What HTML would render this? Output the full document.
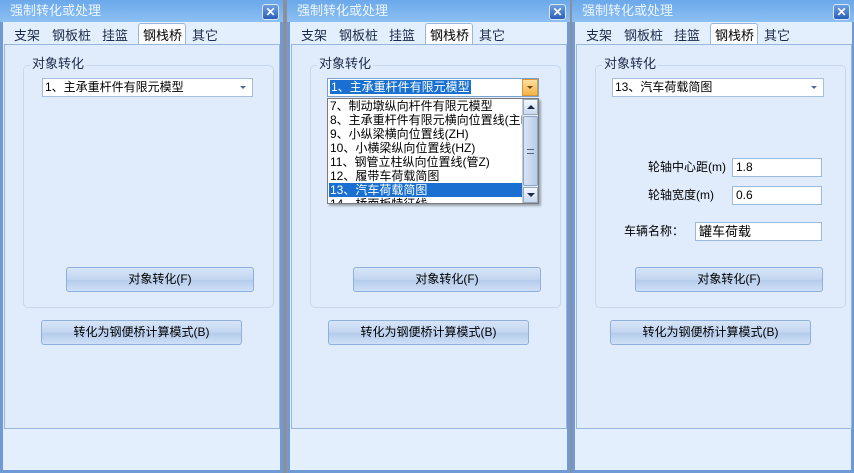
<!DOCTYPE html><html><head><meta charset="utf-8"><style>
*{margin:0;padding:0;box-sizing:border-box}
body{width:854px;height:473px;background:#8a8f99;position:relative;overflow:hidden;font-family:"Liberation Sans","Noto Sans CJK SC",sans-serif;font-size:12px;color:#000}
.p{position:absolute;top:0;width:283px;height:473px;background:#e3effd;border:3px solid #6f9ad6;border-top:none}
.a{position:absolute}
.tb{left:-3px;top:0;width:283px;height:22px;background:linear-gradient(#6aa8ea,#8cc0f2);color:#eef5ff;font-size:13px;line-height:22px;padding:0 0 0 10px}
.x{right:1px;top:4px;width:17px;height:16px;border-radius:3px;background:linear-gradient(#6ea0e0,#2a5fb8);border:1px solid #d8e6f8;color:#fff;font-weight:bold;font-size:12px;text-align:center;line-height:14px}
.tabs{left:0;top:22px;width:277px;height:22px;background:#e3effd}
.tab{top:3px;font-size:13px;color:#1c2a4a}
.sel{left:135px;top:1px;width:48px;height:22px;background:#fff;border:1px solid #99b6dc;border-bottom:none;border-radius:3px 3px 0 0;font-size:13px;padding:1px 0 0 4px}
.ct{left:1px;top:44px;width:276px;height:385px;background:#e0ecfb;border:1px solid #99b6dc}
.gb{left:18px;top:20px;width:251px;height:243px;border:1px solid #c8d8ec;border-radius:5px}
.gl{left:25px;top:11px;background:#e0ecfb;padding:0 2px;font-size:13px;line-height:15px;color:#1c2a4a}
.cb{height:19px;background:#fff;border:1px solid #a7bfdc;padding:0 0 0 2px;font-size:12px;line-height:17px}
.ar{right:6px;top:7px;width:0;height:0;border-left:3px solid transparent;border-right:3px solid transparent;border-top:3px solid #4a6a9a}
.bt{height:25px;border:1px solid #8fb0dc;border-radius:3px;background:linear-gradient(#d7e5f8,#c2d6f0 50%,#b5cbeb 52%,#cfe0f7);text-align:center;line-height:23px;font-size:12px}
.in{height:19px;background:#fff;border:1px solid #9ab8e0;padding:0 0 0 3px;font-size:12px;line-height:17px}
.li{position:absolute;left:1px;height:14px;line-height:14px;width:194px;font-size:12px;padding-left:1px;white-space:nowrap;overflow:hidden}
.lb{font-size:12px;line-height:15px}
</style></head><body>

<div class="p" style="left:0">
 <div class="a tb">强制转化或处理</div><div class="a x">✕</div>
 <div class="a tabs">
  <span class="a tab" style="left:11px">支架</span><span class="a tab" style="left:49px">钢板桩</span><span class="a tab" style="left:99px">挂篮</span>
  <div class="a sel">钢栈桥</div><span class="a tab" style="left:189px">其它</span>
 </div>
 <div class="a ct">
  <div class="a gb"></div><div class="a gl">对象转化</div>
  <div class="a cb" style="left:37px;top:33px;width:211px">1、主承重杆件有限元模型<div class="a ar"></div></div>
  <div class="a bt" style="left:61px;top:222px;width:188px">对象转化(F)</div>
  <div class="a bt" style="left:36px;top:275px;width:201px">转化为钢便桥计算模式(B)</div>
 </div>
</div>

<div class="p" style="left:287px">
 <div class="a tb">强制转化或处理</div><div class="a x">✕</div>
 <div class="a tabs">
  <span class="a tab" style="left:11px">支架</span><span class="a tab" style="left:49px">钢板桩</span><span class="a tab" style="left:99px">挂篮</span>
  <div class="a sel">钢栈桥</div><span class="a tab" style="left:189px">其它</span>
 </div>
 <div class="a ct">
  <div class="a gb"></div><div class="a gl">对象转化</div>
  <div class="a cb" style="left:35px;top:33px;width:212px;border-color:#7aa0d0"><span style="background:#1a70d0;color:#fff;padding:0 1px">1、主承重杆件有限元模型</span>
   <div class="a" style="right:0;top:0;width:16px;height:17px;background:linear-gradient(#fde0a0,#f3b24a);border:1px solid #d89838"><div class="a ar" style="right:4px;top:6px;border-top-color:#6a4a10"></div></div></div>
  <div class="a" style="left:35px;top:53px;width:212px;height:106px;background:#fff;border:1px solid #7a7a7a;box-shadow:2px 2px 2px rgba(0,0,0,.3);overflow:hidden">
   <div class="li" style="top:0px">7、制动墩纵向杆件有限元模型</div>
   <div class="li" style="top:14px">8、主承重杆件有限元横向位置线(主H</div>
   <div class="li" style="top:28px">9、小纵梁横向位置线(ZH)</div>
   <div class="li" style="top:42px">10、小横梁纵向位置线(HZ)</div>
   <div class="li" style="top:56px">11、钢管立柱纵向位置线(管Z)</div>
   <div class="li" style="top:70px">12、履带车荷载简图</div>
   <div class="li" style="top:84px;background:#1a70d0;color:#fff">13、汽车荷载简图</div>
   <div class="li" style="top:98px;height:14px">14、桥面板特征线</div>
   <div class="a" style="right:0;top:0;width:16px;height:104px;background:#e8eef8;border-left:1px solid #c0ccdc">
    <div class="a" style="left:0;top:0;width:15px;height:16px;background:linear-gradient(#f4f8fe,#c8d8ee);border:1px solid #9ab"></div>
    <div class="a" style="left:4px;top:6px;border-left:4px solid transparent;border-right:4px solid transparent;border-bottom:4px solid #1c2a4a"></div>
    <div class="a" style="left:0;top:17px;width:15px;height:70px;background:linear-gradient(90deg,#d8e4f4,#b8cce8);border:1px solid #8aa4c8;border-radius:2px"></div>
    <div class="a" style="left:4px;top:50px;width:7px;height:5px;border-top:1px solid #567;border-bottom:1px solid #567"></div>
    <div class="a" style="left:0;top:88px;width:15px;height:16px;background:linear-gradient(#f4f8fe,#c8d8ee);border:1px solid #9ab"></div>
    <div class="a" style="left:4px;top:94px;border-left:4px solid transparent;border-right:4px solid transparent;border-top:4px solid #1c2a4a"></div>
   </div>
  </div>
  <div class="a bt" style="left:61px;top:222px;width:188px">对象转化(F)</div>
  <div class="a bt" style="left:36px;top:275px;width:201px">转化为钢便桥计算模式(B)</div>
 </div>
</div>

<div class="p" style="left:572px;width:282px">
 <div class="a tb">强制转化或处理</div><div class="a x">✕</div>
 <div class="a tabs">
  <span class="a tab" style="left:11px">支架</span><span class="a tab" style="left:49px">钢板桩</span><span class="a tab" style="left:99px">挂篮</span>
  <div class="a sel">钢栈桥</div><span class="a tab" style="left:189px">其它</span>
 </div>
 <div class="a ct">
  <div class="a gb"></div><div class="a gl">对象转化</div>
  <div class="a cb" style="left:35px;top:33px;width:212px">13、汽车荷载简图<div class="a ar"></div></div>
  <div class="a lb" style="left:71px;top:115px">轮轴中心距(m)</div>
  <div class="a in" style="left:155px;top:113px;width:90px">1.8</div>
  <div class="a lb" style="left:71px;top:143px">轮轴宽度(m)</div>
  <div class="a in" style="left:155px;top:141px;width:90px">0.6</div>
  <div class="a lb" style="left:47px;top:179px">车辆名称：</div>
  <div class="a in" style="left:118px;top:177px;width:127px;font-size:13px">罐车荷载</div>
  <div class="a bt" style="left:58px;top:222px;width:188px">对象转化(F)</div>
  <div class="a bt" style="left:33px;top:275px;width:201px">转化为钢便桥计算模式(B)</div>
 </div>
</div>
</body></html>
